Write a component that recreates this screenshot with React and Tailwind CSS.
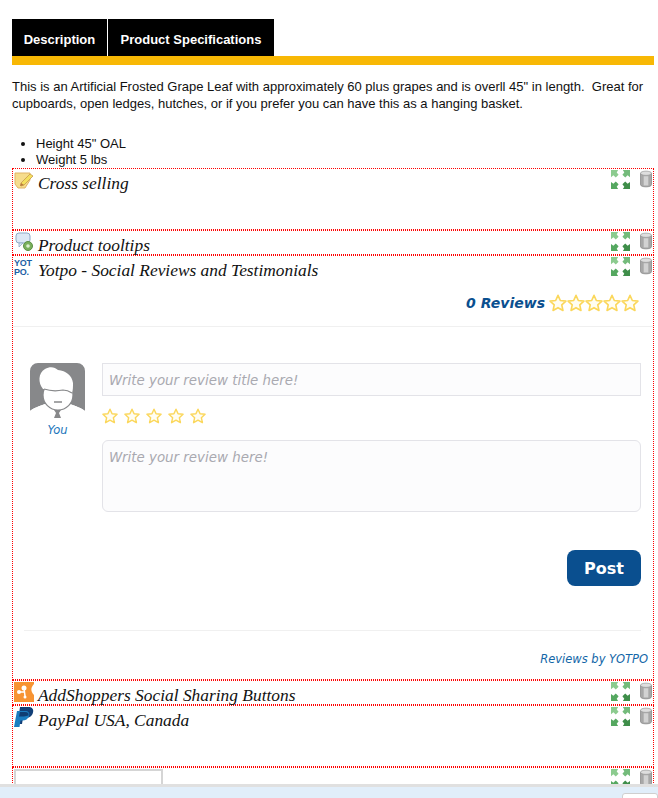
function ExpandIcon() {
    return (
        <svg viewBox="0 0 20 20" className="h-[19px] w-[19px] shrink-0">
            <path d="M0 0h7.500L6 2.500 8 5 5 8 2.500 5.500 0 7.500Z" fill="#8ccb8f" />
            <path d="M20 0h-7.500L14 2.500 12 5l3 3 2.500-2.500L20 7.500Z" fill="#74bb7b" />
            <path d="M0 20h7.500L6 17.500 8 15l-3-3-2.500 2.500L0 12.500Z" fill="#55a860" />
            <path d="M20 20h-7.500l1.500-2.500-2-2.500 3-3 2.500 2.500 2.500-2Z" fill="#3f8e4a" />
        </svg>
    );
}

function TrashIcon() {
    return (
        <svg viewBox="0 0 13 18" className="h-[18px] w-[12px] shrink-0">
            <path d="M.5 3v12c0 1.500 2.500 2.500 6 2.500s6-1 6-2.500V3Z" fill="#a8a8a8" stroke="#858585" strokeWidth="0.8" />
            <rect x="4" y="6" width="5" height="10" fill="#d2d2d2" />
            <ellipse cx="6.500" cy="2.800" rx="6" ry="2.300" fill="#dedede" stroke="#9a9a9a" strokeWidth="0.8" />
        </svg>
    );
}

function NoteIcon() {
    return (
        <svg viewBox="0 0 20 20" className="h-5 w-5">
            <path d="M1 3h15v7l-5 8H4L1 14Z" fill="#f6dc8c" stroke="#e0b466" />
            <path d="M7 13 16 4l3 2-9 9-3 1Z" fill="#f4e05e" stroke="#c89a4a" strokeWidth="0.8" />
            <path d="M6 16l1-3 3 2Z" fill="#b9793c" />
        </svg>
    );
}

function TooltipIcon() {
    return (
        <svg viewBox="0 0 20 20" className="h-5 w-5">
            <rect x="2" y="1" width="14" height="10" rx="3" fill="#dce8f5" stroke="#8fa9c6" />
            <path d="M5 11v4l4-4Z" fill="#dce8f5" stroke="#8fa9c6" strokeWidth="0.8" />
            <circle cx="14" cy="14" r="4.500" fill="#79b05c" stroke="#5b8f45" />
            <circle cx="14" cy="14" r="1.800" fill="#dcefd0" />
        </svg>
    );
}

function YotpoIcon() {
    return (
        <div className="flex h-5 w-5 flex-col pt-[2px] font-['Liberation_Sans',sans-serif] text-[9px] leading-[9px] font-bold tracking-[-0.3px] text-[#1d5fa5]">
            <span>YOT</span>
            <span>PO.</span>
        </div>
    );
}

function AddShoppersIcon() {
    return (
        <svg viewBox="0 0 20 20" className="h-5 w-5">
            <rect width="20" height="20" fill="#f79433" />
            <circle cx="5" cy="10" r="2" fill="#fff" />
            <circle cx="10" cy="6" r="2.500" fill="#fff" />
            <path d="M5 10h6M10 6l1 8" stroke="#fff" strokeWidth="1.500" fill="none" />
            <circle cx="11" cy="15" r="1.500" fill="#fff" />
            <path d="M20 2c-3 3-4 7 0 11Z" fill="#fff" />
        </svg>
    );
}

function PaypalIcon() {
    return (
        <svg viewBox="0 0 20 20" className="h-5 w-5">
            <path d="M6 0h8c4 0 6 2 5 5.500-1 4-4 5.500-7.500 5.500H9l-1 6H3.500Z" fill="#123f77" />
            <path d="M3 4h8c3.500 0 5 2 4 5s-3.500 4.500-6.500 4.500H6.500L5.500 20H0Z" fill="#1a7cc0" />
            <path d="M6 5h5c3 0 4 1.500 3.500 3.500-3 1-6 1-9.500 1Z" fill="#0f3d73" />
        </svg>
    );
}

function Star({ size }) {
    return (
        <svg viewBox="0 0 20 20" className={size}>
            <path
                d="M10 1.500 12.600 7.200 18.800 7.900 14.200 12.100 15.500 18.300 10 15.200 4.500 18.300 5.800 12.100 1.200 7.900 7.400 7.200Z"
                fill="#fffdf2"
                stroke="#fbd75b"
                strokeWidth="1.800"
                strokeLinejoin="round"
            />
        </svg>
    );
}

function Avatar() {
    return (
        <svg viewBox="0 0 55 55" className="h-[55px] w-[55px]">
            <path d="M8 0h39a8 8 0 0 1 8 8v40c-3-3-10-5-15-7H15C10 43 3 45 0 48V8a8 8 0 0 1 8-8Z" fill="#87888a" />
            <path d="M0 48c3-3 10-5 15-7h25c5 2 12 4 15 7l-5 7H5Z" fill="#fff" />
            <path d="M24 47h7l-2 3 2 5h-7l2-5Z" fill="#87888a" />
            <circle cx="28" cy="32" r="15" fill="#fff" stroke="#87888a" strokeWidth="1.200" />
            <path d="M13 26C8 20 8 10 15 6c5-3 10-2 13 1 8 1 14 5 15 13 0 4 0 7-1 10-3-3-7-3-12-3-6 0-12 0-17-1Z" fill="#fff" />
            <path d="M14 26c6 2 14 2 19 1 3 0 6 1 9 3" stroke="#87888a" strokeWidth="1.200" fill="none" />
            <path d="M24 39h8" stroke="#87888a" strokeWidth="1.500" />
        </svg>
    );
}

function Module({ icon, title, className, children }) {
    return (
        <div className={`border border-dotted border-[#ff0000] ${className}`}>
            <div className="flex items-start justify-between pt-px pr-px pl-px">
                <div className="flex items-start">
                    <div className="w-[24px] shrink-0">{icon}</div>
                    <span className="pt-[3px] font-['Liberation_Serif',serif] text-[17.4px] leading-[20px] text-[#111] italic">
                        {title}
                    </span>
                </div>
                <div className="flex items-start gap-[10px]">
                    <ExpandIcon />
                    <TrashIcon />
                </div>
            </div>
            {children}
        </div>
    );
}

function Yotpo() {
    return (
        <div className="font-['DejaVu_Sans',sans-serif]">
            <div className="flex h-[36px] items-center justify-end pt-[10px] pr-[14px]">
                <span className="text-[14px] font-bold text-[#0a4f8f] italic">0 Reviews</span>
                <div className="ml-[4px] flex">
                    {[0, 1, 2, 3, 4].map((i) => (
                        <Star key={i} size="h-[18px] w-[18px]" />
                    ))}
                </div>
            </div>
            <div className="mt-[10px] h-px bg-[#f0f0f0]"></div>
            <div className="flex pt-[36px] pr-[12px] pl-[17px]">
                <div className="flex w-[55px] shrink-0 flex-col items-center">
                    <Avatar />
                    <span className="mt-[5px] text-[11.5px] leading-[14px] text-[#1b75bb] italic">You</span>
                </div>
                <div className="ml-[17px] flex-1">
                    <input
                        placeholder="Write your review title here!"
                        className="block h-[33px] w-full border border-[#e3e3e8] bg-[#fcfcfd] px-[6px] pt-px text-[13.4px] italic outline-none placeholder:text-[#a9a9b0]"
                    />
                    <div className="mt-[12px] flex gap-[6px]">
                        {[0, 1, 2, 3, 4].map((i) => (
                            <Star key={i} size="h-[16px] w-[16px]" />
                        ))}
                    </div>
                    <textarea
                        placeholder="Write your review here!"
                        className="mt-[16px] block h-[72px] w-full resize-none rounded-[6px] border border-[#e3e3e8] bg-[#fcfcfd] px-[6px] py-[7px] text-[13.4px] italic outline-none placeholder:text-[#a9a9b0]"
                    ></textarea>
                    <div className="mt-[38px] flex justify-end">
                        <button className="h-[36px] w-[74px] rounded-[8px] bg-[#0a4f8f] pt-px text-[16px] font-bold text-white">
                            Post
                        </button>
                    </div>
                </div>
            </div>
            <div className="mt-[44px] mr-[12px] ml-[11px] h-px bg-[#f0f0f0]"></div>
            <div className="pt-[21px] pr-[5px] text-right text-[11.5px] leading-[14px] text-[#1367a8] italic">
                Reviews by YOTPO
            </div>
        </div>
    );
}

export default function App() {
    return (
        <div className="relative h-[798px] w-[658px] overflow-hidden bg-white pt-[19px] pr-[4px] pl-[12px] font-['Liberation_Sans',sans-serif] text-[#111]">
            <div className="flex">
                <div className="flex h-[37px] w-[95px] items-center justify-center bg-black pt-[4px] text-[13px] font-bold text-white">
                    Description
                </div>
                <div className="ml-px flex h-[37px] w-[166px] items-center justify-center bg-black pt-[4px] text-[13px] font-bold text-white">
                    Product Specifications
                </div>
            </div>
            <div className="h-[9px] bg-[#f8b805]"></div>

            <p className="mt-[13px] text-[13px] leading-[17px] whitespace-pre-wrap">
                {'This is an Artificial Frosted Grape Leaf with approximately 60 plus grapes and is overll 45" in length.  Great for cupboards, open ledges, hutches, or if you prefer you can have this as a hanging basket.'}
            </p>
            <ul className="mt-[24px] list-disc pl-[24px] text-[13px] leading-[16px]">
                <li>Height 45" OAL</li>
                <li>Weight 5 lbs</li>
            </ul>

            <Module icon={<NoteIcon />} title="Cross selling" className="h-[62px]" />
            <Module icon={<TooltipIcon />} title="Product tooltips" className="h-[25px]" />
            <Module icon={<YotpoIcon />} title="Yotpo - Social Reviews and Testimonials" className="h-[425px]">
                <Yotpo />
            </Module>
            <Module icon={<AddShoppersIcon />} title="AddShoppers Social Sharing Buttons" className="h-[25px]" />
            <Module icon={<PaypalIcon />} title="PayPal USA, Canada" className="h-[62px]" />
            <div className="relative h-[40px] border border-dotted border-[#ff0000]">
                <div className="mt-px ml-px flex h-[30px] w-[149px] items-end justify-center border-2 border-[#d5d5d5]">
                    <div className="h-[3px] w-[36px] rounded-t-full bg-[#e2e2e2]"></div>
                </div>
                <div className="absolute top-px right-px flex items-start gap-[10px]">
                    <ExpandIcon />
                    <TrashIcon />
                </div>
            </div>

            <div className="absolute right-0 bottom-0 left-0 h-[14px] border-t-[3px] border-[#e0e0e0] bg-[#e1eefa]">
                <div className="absolute top-[6px] right-0 h-[10px] w-[36px] rounded-t-[3px] border border-[#cfcfcf] bg-white"></div>
            </div>
        </div>
    );
}
